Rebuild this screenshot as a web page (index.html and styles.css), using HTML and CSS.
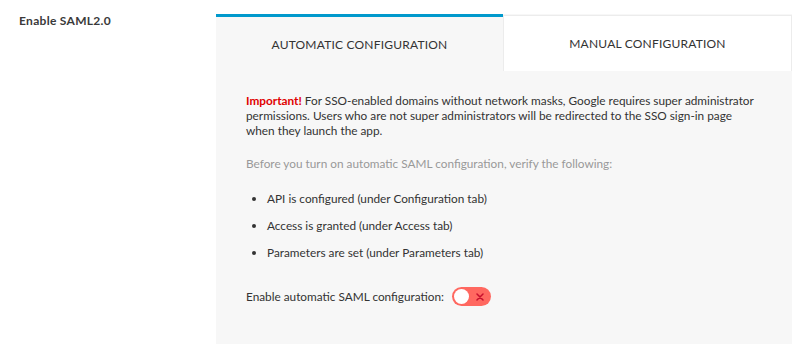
FILE: index.html
```html
<!DOCTYPE html>
<html>
<head>
<meta charset="utf-8">
<link rel="stylesheet" href="styles.css">
</head>
<body>
<div class="row">
  <div class="label">Enable SAML2.0</div>
  <div class="panel">
    <div class="tabs">
      <div class="tab active">AUTOMATIC CONFIGURATION</div>
      <div class="tab">MANUAL CONFIGURATION</div>
    </div>
    <div class="content">
      <p class="note"><span class="imp">Important!</span> For SSO-enabled domains without network masks, Google requires super administrator permissions. Users who are not super administrators will be redirected to the SSO sign-in page when they launch the app.</p>
      <p class="muted">Before you turn on automatic SAML configuration, verify the following:</p>
      <ul class="checks">
        <li>API is configured (under Configuration tab)</li>
        <li>Access is granted (under Access tab)</li>
        <li>Parameters are set (under Parameters tab)</li>
      </ul>
      <div class="enable">
        <span>Enable automatic SAML configuration:</span>
        <span class="toggle"><span class="knob"></span><svg class="x" width="8" height="8" viewBox="0 0 8 8"><path d="M1 1L7 7M7 1L1 7" stroke="#c8102e" stroke-width="1.5" stroke-linecap="round"/></svg></span>
      </div>
    </div>
  </div>
</div>
</body>
</html>
```
FILE: styles.css
```css
html, body { margin: 0; padding: 0; background: #fff; }
body { font-family: "Lato", "Open Sans", sans-serif; color: #333; font-size: 12px; }
.row { display: flex; height: 352px; }
.label { width: 197px; padding: 13px 0 0 19px; font-weight: 700; color: #3a3a3a; font-size: 12px; letter-spacing: 0.3px; }
.panel { flex: 1; margin: 14px 1px 8px 0; background: #f7f7f7; display: flex; flex-direction: column; }
.tabs { display: flex; height: 57px; }
.tab { display: flex; align-items: center; justify-content: center; font-size: 12px; letter-spacing: 0.2px; color: #333; box-sizing: border-box; }
.tab.active { width: 287px; border-top: 3px solid #0099cc; background: #f7f7f7; }
.tab:not(.active) { flex: 1; background: #fff; border: 1px solid #ececec; border-bottom: none; margin-top: 1px; }
.content { padding: 22px 30px 0 30px; font-size: 11.8px; }
.note { margin: 0; line-height: 15px; color: #333; }
.imp { color: #e00000; font-weight: 700; }
.muted { margin: 18px 0 0; color: #999; line-height: 15px; }
.checks { margin: 20px 0 0; padding-left: 21px; }
.checks li { line-height: 15px; margin-bottom: 12px; }
.enable { display: flex; align-items: center; gap: 8px; margin-top: 27px; }
.toggle { width: 39px; height: 19px; border-radius: 10px; background: #ff6860; display: flex; align-items: center; box-sizing: border-box; padding-left: 2px; }
.knob { width: 15px; height: 15px; border-radius: 50%; background: #fff; }
.x { margin-left: 7px; display: block; }
```
